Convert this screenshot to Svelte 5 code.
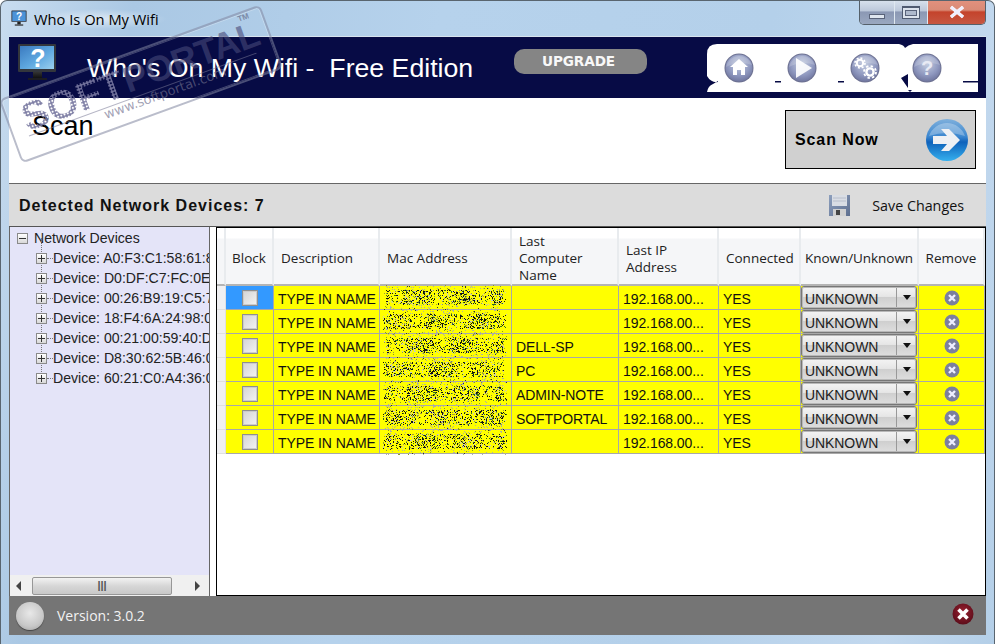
<script>
  const devices = ['A0:F3:C1:58:61:8E','D0:DF:C7:FC:0E:1A','00:26:B9:19:C5:7B','18:F4:6A:24:98:0C','00:21:00:59:40:D2','D8:30:62:5B:46:0F','60:21:C0:A4:36:0D'];
  const rows = ['', '', 'DELL-SP', 'PC', 'ADMIN-NOTE', 'SOFTPORTAL', ''];
  const cols = [9, 48, 106, 132, 107, 100, 82, 118, 66];

  function noise(canvas, seed) {
    const ctx = canvas.getContext('2d');
    let s = seed * 7919 + 13;
    const r = () => { s = (s * 16807) % 2147483647; return s / 2147483647; };
    const w = canvas.width, h = canvas.height;
    for (let y = 0; y < h; y++) {
      const dist = Math.abs(y - 12) / 10;
      const dense = dist < 0.75 ? 0.4 : 0.12;
      for (let x = 0; x < w; x++) {
        const edge = x < 3 || x > w - 4 ? 0.5 : 1;
        const clump = Math.sin(x / 7 + seed * 3) > -0.5 ? 1 : 0.55;
        if (r() < dense * edge * clump) {
          const c = r();
          const near = dist < 0.75;
          ctx.fillStyle = near
            ? (c < 0.42 ? '#111' : c < 0.6 ? '#2f6b22' : c < 0.8 ? '#9c9c40' : '#c8c8c8')
            : (c < 0.15 ? '#333' : c < 0.75 ? '#b0b0a0' : '#8f9a20');
          ctx.fillRect(x, y, 1, 1);
        }
      }
    }
  }
</script>

<div class="window">
  <div class="titlebar">
    <svg class="app-ico" viewBox="0 0 38 40" width="16" height="17">
      <rect x="1" y="1" width="36" height="27" rx="1" fill="#2b2f38"/>
      <rect x="3" y="3" width="32" height="23" fill="#4c93d8"/>
      <text x="19" y="23" text-anchor="middle" font-size="24" font-weight="700" font-family="Liberation Sans" fill="#fff">?</text>
      <rect x="15" y="28" width="8" height="6" fill="#222"/>
      <rect x="9" y="34" width="20" height="3" fill="#333"/>
    </svg>
    <span class="wintitle">Who Is On My Wifi</span>
    <div class="controls">
      <div class="ctl min"><i></i></div>
      <div class="ctl max"><i></i></div>
      <div class="ctl close">
        <svg viewBox="0 0 18 14" width="18" height="14"><path d="M3 2 L15 12 M15 2 L3 12" stroke="#fff" stroke-width="3.4"/><path d="M3 2 L15 12 M15 2 L3 12" stroke="#eef" stroke-width="2.4"/></svg>
      </div>
    </div>
  </div>

  <div class="client">
    <header class="banner">
      <svg class="logo" viewBox="0 0 38 40" width="38" height="40">
        <defs>
          <linearGradient id="scr" x1="0" y1="0" x2="1" y2="1"><stop offset="0" stop-color="#3a7ac0"/><stop offset=".55" stop-color="#5fa8e0"/><stop offset="1" stop-color="#9ad0ee"/></linearGradient>
          <linearGradient id="stand" x1="0" y1="0" x2="0" y2="1"><stop offset="0" stop-color="#333"/><stop offset="1" stop-color="#111"/></linearGradient>
        </defs>
        <rect x="0" y="0" width="38" height="28" rx="1" fill="#33363c"/>
        <rect x="2" y="2" width="34" height="23" fill="url(#scr)"/>
        <text x="20" y="23" text-anchor="middle" font-size="25" font-weight="700" font-family="Liberation Sans" fill="#fff">?</text>
        <rect x="15" y="28" width="9" height="6" fill="url(#stand)"/>
        <rect x="10" y="34" width="19" height="2" fill="#1c1c22"/>
      </svg>
      <h1 class="apptitle">Who's On My Wifi -&nbsp; Free Edition</h1>
      <button class="upgrade">UPGRADE</button>
      <svg class="nav" viewBox="0 0 271 48" width="271" height="48">
        <defs>
          <radialGradient id="orb" cx=".5" cy=".35" r=".7"><stop offset="0" stop-color="#c4cde0"/><stop offset=".6" stop-color="#8f98bf"/><stop offset="1" stop-color="#6a7099"/></radialGradient>
          <g id="ball"><circle r="14.5" fill="#6d7191"/><circle r="13.5" fill="url(#orb)"/><path d="M-13 -1 A13.5 13.5 0 0 1 13 -3 Q0 -8 -13 -1Z" fill="#fff" opacity=".18"/></g>
        </defs>
        <path d="M10 0 H271 V48 H6 L0 48 V10 Q0 0 10 0Z" fill="#fff"/>
        <path d="M0 48 Q1 42 6 40 L11 37 L11 38 Q4 39 0 32 V48 Z" fill="#070b45"/>
        <path d="M192 0 Q197 1 198 4 Q201 1 206 0Z" fill="#070b45"/>
        <path d="M194 34 L201 30 L201 44 Z M201 46 H205 L203 48Z" fill="#070b45"/>
        <path d="M68 37 h6 v1.5 h-6z M131 37 h6 v1.5 h-6z M256 37 h15 v1.5 h-15z" fill="#070b45"/>
        <g transform="translate(32 24)"><use href="#ball"/><path d="M0 -9 L-9 -1 H-6 V7 H-2 V2 H2 V7 H6 V-1 H9Z" fill="#fff"/></g>
        <g transform="translate(95 24)"><use href="#ball"/><path d="M-6 -10 L10 0 L-6 10Z" fill="#fff" opacity=".9"/></g>
        <g transform="translate(158 24)"><use href="#ball"/>
          <circle cx="-5" cy="-5" r="3.2" fill="none" stroke="#fff" stroke-width="2"/><circle cx="-5" cy="-5" r="5" fill="none" stroke="#fff" stroke-width="1.6" stroke-dasharray="2 1.9"/>
          <circle cx="5" cy="4" r="3.6" fill="none" stroke="#fff" stroke-width="2.4"/><circle cx="5" cy="4" r="6" fill="none" stroke="#fff" stroke-width="1.8" stroke-dasharray="2.4 2.3"/>
        </g>
        <g transform="translate(220 24)"><use href="#ball"/><text y="7" text-anchor="middle" font-size="20" font-weight="700" font-family="Liberation Sans" fill="#e8eaf4">?</text></g>
      </svg>
    </header>

    <section class="scanbar">
      <h2 class="scan">Scan</h2>
      <button class="scannow">
        <span>Scan Now</span>
        <svg viewBox="0 0 44 44" width="44" height="44">
          <defs>
            <linearGradient id="ab" x1="0" y1="0" x2="0" y2="1"><stop offset="0" stop-color="#7fb0dc"/><stop offset=".42" stop-color="#3b86cf"/><stop offset=".55" stop-color="#0f62bb"/><stop offset="1" stop-color="#35b0ee"/></linearGradient>
          </defs>
          <circle cx="22" cy="22" r="21" fill="url(#ab)"/>
          <path d="M4 18 A19 19 0 0 1 40 18 Q22 12 4 18Z" fill="#fff" opacity=".28"/>
          <path d="M8 18 H22 L16 11 H24 L35 22 L24 33 H16 L22 26 H8Z" fill="#eef0f4"/>
        </svg>
      </button>
    </section>

    <div class="detected">
      <strong>Detected Network Devices: 7</strong>
      <svg class="floppy" viewBox="0 0 23 23" width="23" height="23">
        <defs><linearGradient id="fl" x1="0" y1="0" x2="1" y2="1"><stop offset="0" stop-color="#8d9fbd"/><stop offset="1" stop-color="#5e6f8f"/></linearGradient></defs>
        <path d="M1 1 H22 V22 H1Z" fill="url(#fl)"/>
        <rect x="4" y="1" width="15" height="11" fill="#d9dde4"/>
        <path d="M5 4 H18 M5 7 H18" stroke="#b8becb"/>
        <rect x="5" y="15" width="13" height="7" fill="#d0d0d0"/>
        <rect x="8" y="16" width="4" height="5" fill="#444"/>
      </svg>
      <span class="save">Save Changes</span>
    </div>

    <div class="main">
      <aside class="tree">
        <div class="treescroll">
          <div class="node root"><i class="box minus"></i><span>Network Devices</span></div>
          <div class="children">
            {#each devices as d}
              <div class="node"><i class="box plus"></i><span>Device: {d}</span></div>
            {/each}
          </div>
        </div>
        <div class="hscroll">
          <svg viewBox="0 0 6 10" width="6" height="10"><path d="M5 0 V10 L0 5Z" fill="#444"/></svg>
          <div class="thumb"><span>|||</span></div>
          <svg viewBox="0 0 6 10" width="6" height="10"><path d="M1 0 V10 L6 5Z" fill="#444"/></svg>
        </div>
      </aside>

      <div class="gridwrap">
        <table>
          <colgroup>
            {#each cols as c}<col style="width:{c}px" />{/each}
          </colgroup>
          <thead>
            <tr>
              <th class="rh"></th>
              <th class="c">Block</th>
              <th>Description</th>
              <th>Mac Address</th>
              <th>Last Computer Name</th>
              <th>Last IP Address</th>
              <th>Connected</th>
              <th class="c kn">Known/Unknown</th>
              <th class="c">Remove</th>
            </tr>
          </thead>
          <tbody>
            {#each rows as name, i}
              <tr>
                <td class="rh"></td>
                <td class="blk" class:sel={i === 0}><i class="check"></i></td>
                <td>TYPE IN NAME</td>
                <td class="mac"><canvas width="124" height="26" use:noise={i + 1}></canvas></td>
                <td>{name}</td>
                <td>192.168.00...</td>
                <td>YES</td>
                <td class="combo-cell">
                  <div class="combo"><span>UNKNOWN</span><b><i></i></b></div>
                </td>
                <td class="rm">
                  <svg viewBox="0 0 16 16" width="16" height="16">
                    <circle cx="8" cy="8" r="7.5" fill="#7b7f9e"/>
                    <path d="M5 5 L11 11 M11 5 L5 11" stroke="#eef" stroke-width="2.4"/>
                  </svg>
                </td>
              </tr>
            {/each}
          </tbody>
        </table>
      </div>
    </div>

    <footer class="status">
      <i class="led"></i>
      <span>Version: 3.0.2</span>
      <svg class="quit" viewBox="0 0 22 22" width="22" height="22">
        <defs><radialGradient id="qr" cx=".5" cy=".4" r=".6"><stop offset="0" stop-color="#9a2030"/><stop offset="1" stop-color="#5c0d1a"/></radialGradient></defs>
        <circle cx="11" cy="11" r="10.5" fill="url(#qr)"/>
        <path d="M6.5 6.5 L15.5 15.5 M15.5 6.5 L6.5 15.5" stroke="#fff" stroke-width="3.6"/>
      </svg>
    </footer>
  </div>

  <div class="wm" aria-hidden="true">
    <span class="wm-soft">SOFT</span>
    <span class="wm-portal">PORTAL</span>
    <span class="wm-tm">TM</span>
    <span class="wm-url">www.softportal.com</span>
    <i class="wm-line"></i>
  </div>
</div>

<style>
  :global(body) { margin: 0; background: #fff; }
  * { box-sizing: border-box; }
  .window {
    position: relative; width: 995px; height: 644px; overflow: hidden;
    display: flex; flex-direction: column;
    padding: 0 8px 9px 8px;
    border: 1px solid #59656f; border-bottom: 0; border-radius: 7px 7px 0 0;
    background: linear-gradient(100deg, #c8dcef 0%, #aac8e4 12%, #b6d2ec 40%, #b4d0ea 70%, #c2d8ee 90%, #b4cfe8 100%);
    font-family: "Open Sans", sans-serif; color: #111;
  }
  .titlebar { height: 35px; flex: none; display: flex; align-items: flex-start; position: relative; margin-left: -8px; margin-right: -8px; }
  .app-ico { position: absolute; left: 10px; top: 9px; }
  .wintitle {
    position: absolute; left: 33px; top: 8px; font-size: 14.7px; line-height: 20px; color: #000;
    background: radial-gradient(closest-side, rgba(255,255,255,.55), rgba(255,255,255,0)); padding: 0 8px 0 0;
  }
  .controls {
    position: absolute; right: 8px; top: -1px; height: 25px; display: flex;
    border: 1px solid #55606a; border-top: 0; border-radius: 0 0 5px 5px; overflow: hidden;
  }
  .ctl { height: 24px; display: flex; align-items: center; justify-content: center; border-right: 1px solid #dfe8f0; }
  .ctl.min, .ctl.max { background: linear-gradient(#d9e3ee 0%, #bcc8da 45%, #8b98b4 50%, #9aa8c0 100%); }
  .min { width: 35px; } .max { width: 33px; } .close { width: 57px; border-right: 0; background: linear-gradient(#e2917e 0%, #d98a76 42%, #c4432c 50%, #c65742 100%); }
  .min i { display: block; width: 16px; height: 5px; margin-top: 8px; background: #dfe6f0; border: 1px solid #59637a; }
  .max i { display: block; width: 18px; height: 13px; border: 1px solid #4f5a70; border-top-width: 2px; background: #aeb9cc; box-shadow: inset 0 0 0 2px #dbe2ec, inset 0 0 0 3px #59637a; }

  .client { flex: 1; min-height: 0; display: flex; flex-direction: column; background: #fff; }
  .banner { height: 62px; flex: none; background: #070b45; display: flex; align-items: flex-start; border-top: 1px solid #d8e4ee; }
  .logo { margin: 7px 0 0 9px; flex: none; }
  .apptitle { margin: 16px 0 0 31px; width: 427px; font: 400 26.7px/30px "Liberation Sans", sans-serif; color: #fff; white-space: nowrap; flex: none; }
  .upgrade {
    margin-top: 12px; width: 133px; height: 25px; padding: 0 4px 0 0; border: 0; border-radius: 10px; background: #858585; color: #f8f8f8;
    font: 700 13.6px/25px "DejaVu Sans", sans-serif; letter-spacing: -.1px; flex: none;
  }
  .nav { margin: 7px 0 0 60px; flex: none; }
  .scanbar { height: 85px; flex: none; display: flex; justify-content: space-between; align-items: flex-start; background: #fff; }
  .scan { margin: 13px 0 0 23px; font: 400 27px/30px "Liberation Sans", sans-serif; color: #000; }
  .scannow {
    margin: 12px 10px 0 0; width: 191px; height: 59px; padding: 0 6px 0 9px; background: #d0d0d0; border: 1px solid #000;
    display: flex; align-items: center; justify-content: space-between;
    font: 700 16px "Liberation Sans", sans-serif; letter-spacing: .9px; color: #000;
  }
  .detected {
    height: 44px; flex: none; background: #dcdcdc; border-top: 1px solid #666; border-bottom: 1px solid #555;
    display: flex; align-items: center; padding: 1px 22px 0 10px;
  }
  .detected strong { font: 700 16px "Liberation Sans", sans-serif; letter-spacing: 1px; color: #111; flex: 1; }
  .floppy { margin-right: 21px; margin-top: -1px; }
  .save { font-size: 14.3px; color: #111; }

  .main { flex: 1; min-height: 0; display: flex; background: #fff; }
  .tree { width: 201px; flex: none; border-right: 1px solid #666; border-left: 1px solid #666; background: #e4e4f8; display: flex; flex-direction: column; }
  .treescroll { flex: 1; min-height: 0; overflow: hidden; padding: 1px 0 0 7px; font: 14.1px/20px "Liberation Sans", sans-serif; color: #222; white-space: nowrap; }
  .node { height: 20px; display: flex; align-items: center; position: relative; }
  .root span { margin-left: 6px; }
  .children { margin-left: 19px; position: relative; }
  .children::before { content: ""; position: absolute; left: 5px; top: -10px; bottom: 10px; border-left: 1px dotted #777; }
  .children .node span { margin-left: 6px; }
  .children .node::before { content: ""; position: absolute; left: 11px; width: 6px; border-top: 1px dotted #777; }
  .box { display: block; width: 11px; height: 11px; flex: none; border: 1px solid #8a8a8a; background: linear-gradient(#fff, #d8d8d8); position: relative; z-index: 1; }
  .box::before { content: ""; position: absolute; left: 1px; right: 1px; top: 4px; height: 1px; background: #333; }
  .plus::after { content: ""; position: absolute; top: 1px; bottom: 1px; left: 4px; width: 1px; background: #333; }
  .hscroll { height: 21px; flex: none; background: #f0f0f0; display: flex; align-items: center; padding: 0 9px 0 6px; }
  .hscroll svg { flex: none; }
  .thumb { width: 141px; height: 18px; margin: 0 22px 0 10px; border: 1px solid #979797; border-radius: 2px; background: linear-gradient(#f2f2f2, #d6d6d6 50%, #c8c8c8); text-align: center; font: 700 11px/15px "Liberation Sans", sans-serif; color: #555; }

  .gridwrap { width: 770px; flex: none; margin-left: 6px; border: 1px solid #000; background: #fff; overflow: hidden; }
  table { border-collapse: separate; border-spacing: 0; table-layout: fixed; width: 768px; }
  th {
    height: 58px; padding: 5px 6px 0 7px; font-weight: 400; font-size: 13.5px; line-height: 17px; text-align: left; color: #222;
    background: linear-gradient(#fff 0, #fff 10px, #f5f6f8 11px, #f5f6f8 100%);
    border-right: 2px solid #e8ebee; border-bottom: 2px solid #b4b4b4;
  }
  th.c { text-align: center; padding: 5px 2px 0; }
  th.kn { letter-spacing: -.05px; }
  th.rh { padding: 0; }
  td {
    height: 24px; padding: 2px 0 0 4px; background: #ff0; border-right: 1px solid #a8a8a8; border-bottom: 1px solid #a8a8a8;
    font: 14px/20px "Liberation Sans", sans-serif; letter-spacing: -.08px; color: #111; white-space: nowrap; overflow: hidden;
  }
  td.rh { background: #f0f0f2; border-right: 1px solid #e0e0e0; border-bottom: 1px solid #e0e0e0; padding: 0; }
  td.blk { padding: 0; text-align: center; }
  td.blk.sel { background: #3399ff; }
  .check { display: block; width: 16px; height: 16px; margin: 0 0 0 16px; border: 1px solid #8f8f8f; outline: 1px solid #ccc; outline-offset: -2px; background: linear-gradient(135deg, #d4d4d4, #f4f4f4); }
  td.mac { position: relative; padding: 0; overflow: visible; }
  td.mac canvas { position: absolute; left: 3px; top: -1px; z-index: 1; }
  td.combo-cell { padding: 0; vertical-align: top; }
  .combo {
    width: 116px; height: 23px; display: flex; border: 1px solid #777; border-radius: 3px; outline: 1px solid #b8b8b8; outline-offset: -2px;
    background: linear-gradient(#f4f4f4, #e6e6e6 45%, #cfcfcf 50%, #dedede); font: 14px/24px "Liberation Sans", sans-serif; color: #222;
  }
  .combo span { flex: 1; padding-left: 3px; }
  .combo b { width: 20px; border-left: 1px solid #999; display: flex; align-items: center; justify-content: center; }
  .combo i { display: block; border: 4.5px solid transparent; border-top: 5px solid #111; border-bottom: 0; }
  td.rm { padding: 0; text-align: center; line-height: 0; }
  .status { height: 39px; flex: none; background: #757575; display: flex; align-items: center; padding: 0 12px 0 7px; color: #f2f2f2; font-size: 14px; }
  .led { width: 28px; height: 28px; border-radius: 50%; margin-right: 13px; background: radial-gradient(circle at 50% 40%, #e8e8e8, #c8c8c8 60%, #9a9a9a); box-shadow: 0 1px 1px #444; }
  .status span { flex: 1; }
  .quit { margin-top: -4px; }

  .wm { position: absolute; left: 1px; top: 49px; width: 278px; height: 68px; transform: rotate(-20deg); border: 2px solid rgba(130,135,160,.55); border-radius: 6px; pointer-events: none; box-shadow: inset 0 0 0 1px rgba(255,255,255,.25); }
  .wm span, .wm i { position: absolute; }
  .wm-soft {
    left: 14px; top: 4px; font: 900 40px/40px "Liberation Sans", sans-serif; letter-spacing: 0; color: transparent;
    background-image: radial-gradient(circle, rgba(120,120,160,.95) 1.3px, transparent 1.6px); background-size: 3.4px 3.4px;
    -webkit-background-clip: text; background-clip: text;
  }
  .wm-portal { left: 122px; top: 4px; font: 700 36px/40px "Liberation Sans", sans-serif; color: rgba(70,72,120,.6); letter-spacing: -.5px; }
  .wm-tm { left: 250px; top: 0; font: 700 8px/10px "Liberation Sans", sans-serif; color: rgba(90,90,120,.6); }
  .wm-url { left: 92px; top: 41px; font: 13px/15px "DejaVu Sans", sans-serif; color: rgba(110,110,140,.65); }
  .wm-line { left: 14px; right: 18px; top: 42px; height: 1px; background: rgba(120,120,150,.55); }
</style>
